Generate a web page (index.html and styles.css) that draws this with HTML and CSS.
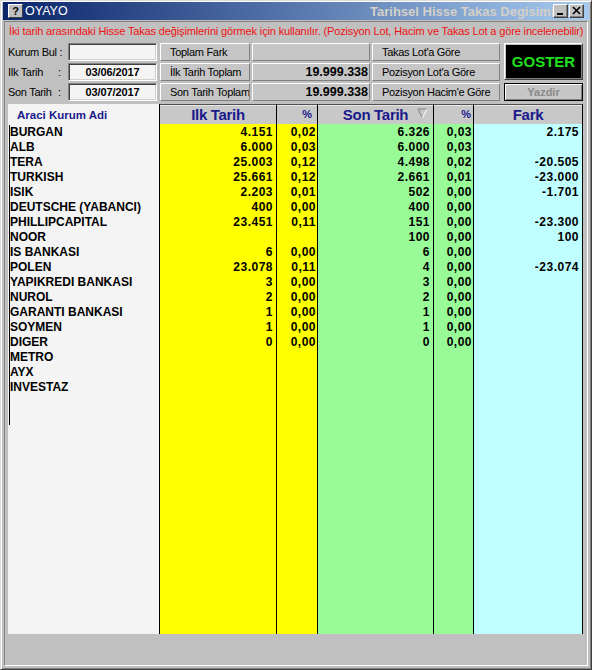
FILE: index.html
```html
<!DOCTYPE html>
<html lang="tr">
<head>
<meta charset="utf-8">
<title>OYAYO</title>
<link rel="stylesheet" href="styles.css">
</head>
<body>
<div class="window">
  <div class="titlebar">
    <div class="title-icon">?</div>
    <div class="caption">
      <span class="app">OYAYO</span>
      <span class="subtitle">Tarihsel Hisse Takas Degisimi</span>
    </div>
    <div class="win-btn win-min">
      <svg width="13" height="12" viewBox="0 0 13 12"><rect x="3" y="8" width="6" height="2" fill="#000"/></svg>
    </div>
    <div class="win-btn win-close">
      <svg width="13" height="12" viewBox="0 0 13 12"><path d="M3 2 L10 9 M10 2 L3 9" stroke="#000" stroke-width="1.6" fill="none"/></svg>
    </div>
  </div>

  <div class="client">
    <div class="hint">İki tarih arasındaki Hisse Takas değişimlerini görmek için kullanılır. (Pozisyon Lot, Hacim ve Takas Lot a göre incelenebilir)</div>

    <div class="controls">
      <div class="label">Kurum Bul :</div>
      <div class="input"></div>
      <div class="btn">Toplam Fark</div>
      <div class="value"></div>
      <div class="btn">Takas Lot'a Göre</div>
      <div class="goster">GOSTER</div>

      <div class="label"><span class="lbl-name">Ilk Tarih</span><span>:</span></div>
      <div class="input">03/06/2017</div>
      <div class="btn">İlk Tarih Toplam</div>
      <div class="value">19.999.338</div>
      <div class="btn">Pozisyon Lot'a Göre</div>

      <div class="label"><span class="lbl-name">Son Tarih</span><span>:</span></div>
      <div class="input">03/07/2017</div>
      <div class="btn">Son Tarih Toplam</div>
      <div class="value">19.999.338</div>
      <div class="btn">Pozisyon Hacim'e Göre</div>
      <div class="yazdir">Yazdir</div>
    </div>

    <div class="grid">
      <div class="col col-name">
        <div class="head head-name">Araci Kurum Adi</div>
        <div class="body">
          <div class="names">
            <div class="name">BURGAN</div>
            <div class="name">ALB</div>
            <div class="name">TERA</div>
            <div class="name">TURKISH</div>
            <div class="name">ISIK</div>
            <div class="name">DEUTSCHE (YABANCI)</div>
            <div class="name">PHILLIPCAPITAL</div>
            <div class="name">NOOR</div>
            <div class="name">IS BANKASI</div>
            <div class="name">POLEN</div>
            <div class="name">YAPIKREDI BANKASI</div>
            <div class="name">NUROL</div>
            <div class="name">GARANTI BANKASI</div>
            <div class="name">SOYMEN</div>
            <div class="name">DIGER</div>
            <div class="name">METRO</div>
            <div class="name">AYX</div>
            <div class="name">INVESTAZ</div>
          </div>
        </div>
      </div>

      <div class="col col-a">
        <div class="head">Ilk Tarih</div>
        <div class="body">
          <div class="cell">4.151</div>
          <div class="cell">6.000</div>
          <div class="cell">25.003</div>
          <div class="cell">25.661</div>
          <div class="cell">2.203</div>
          <div class="cell">400</div>
          <div class="cell">23.451</div>
          <div class="cell"></div>
          <div class="cell">6</div>
          <div class="cell">23.078</div>
          <div class="cell">3</div>
          <div class="cell">2</div>
          <div class="cell">1</div>
          <div class="cell">1</div>
          <div class="cell">0</div>
        </div>
      </div>

      <div class="col col-ap">
        <div class="head head-pct">%</div>
        <div class="body">
          <div class="cell">0,02</div>
          <div class="cell">0,03</div>
          <div class="cell">0,12</div>
          <div class="cell">0,12</div>
          <div class="cell">0,01</div>
          <div class="cell">0,00</div>
          <div class="cell">0,11</div>
          <div class="cell"></div>
          <div class="cell">0,00</div>
          <div class="cell">0,11</div>
          <div class="cell">0,00</div>
          <div class="cell">0,00</div>
          <div class="cell">0,00</div>
          <div class="cell">0,00</div>
          <div class="cell">0,00</div>
        </div>
      </div>

      <div class="col col-b">
        <div class="head head-sort">Son Tarih
          <svg class="sort" width="11" height="11" viewBox="0 0 11 11"><path d="M10 1 L1 1 L5.5 10" stroke="#808080" fill="none"/><path d="M10 1 L5.5 10" stroke="#ffffff" fill="none"/></svg>
        </div>
        <div class="body">
          <div class="cell">6.326</div>
          <div class="cell">6.000</div>
          <div class="cell">4.498</div>
          <div class="cell">2.661</div>
          <div class="cell">502</div>
          <div class="cell">400</div>
          <div class="cell">151</div>
          <div class="cell">100</div>
          <div class="cell">6</div>
          <div class="cell">4</div>
          <div class="cell">3</div>
          <div class="cell">2</div>
          <div class="cell">1</div>
          <div class="cell">1</div>
          <div class="cell">0</div>
        </div>
      </div>

      <div class="col col-bp">
        <div class="head head-pct">%</div>
        <div class="body">
          <div class="cell">0,03</div>
          <div class="cell">0,03</div>
          <div class="cell">0,02</div>
          <div class="cell">0,01</div>
          <div class="cell">0,00</div>
          <div class="cell">0,00</div>
          <div class="cell">0,00</div>
          <div class="cell">0,00</div>
          <div class="cell">0,00</div>
          <div class="cell">0,00</div>
          <div class="cell">0,00</div>
          <div class="cell">0,00</div>
          <div class="cell">0,00</div>
          <div class="cell">0,00</div>
          <div class="cell">0,00</div>
        </div>
      </div>

      <div class="col col-f">
        <div class="head">Fark</div>
        <div class="body">
          <div class="cell">2.175</div>
          <div class="cell"></div>
          <div class="cell">-20.505</div>
          <div class="cell">-23.000</div>
          <div class="cell">-1.701</div>
          <div class="cell"></div>
          <div class="cell">-23.300</div>
          <div class="cell">100</div>
          <div class="cell"></div>
          <div class="cell">-23.074</div>
        </div>
      </div>
    </div>
  </div>
</div>
</body>
</html>
```

FILE: styles.css
```css
* { box-sizing: border-box; }

html, body {
  margin: 0;
  padding: 0;
}

body {
  width: 592px;
  height: 670px;
  overflow: hidden;
  background: #c0c0c0;
  font-family: "Liberation Sans", Arial, sans-serif;
  color: #000;
}

.window {
  width: 592px;
  height: 670px;
  border: 1px solid;
  border-color: #dcdcdc #404040 #404040 #dcdcdc;
  box-shadow: inset 1px 1px #ffffff, inset -1px -1px #808080;
  padding: 1px 2px 2px;
  background: #c0c0c0;
  display: flex;
  flex-direction: column;
}

/* ---------- title bar ---------- */
.titlebar {
  height: 18px;
  flex: none;
  display: flex;
  align-items: center;
  padding: 0 5px;
  background: linear-gradient(to right, #0a246a, #a6caf0);
}

.title-icon {
  width: 15px;
  height: 14px;
  flex: none;
  background: #c0c0c0;
  border: 1px solid;
  border-color: #ffffff #404040 #404040 #ffffff;
  font-size: 11px;
  font-weight: bold;
  line-height: 12px;
  text-align: center;
}

.caption {
  flex: 1;
  min-width: 0;
  display: flex;
  overflow: hidden;
  white-space: nowrap;
}

.app {
  width: 345px;
  flex: none;
  margin-left: 2px;
  color: #ffffff;
  font-size: 12.5px;
}

.subtitle {
  color: #d4d0c8;
  font-size: 13px;
  font-weight: bold;
}

.win-btn {
  width: 15px;
  height: 14px;
  flex: none;
  background: #c0c0c0;
  border: 1px solid;
  border-color: #ffffff #404040 #404040 #ffffff;
  box-shadow: inset -1px -1px #808080;
  display: flex;
}

.win-min { margin-right: 1px; }

/* ---------- client ---------- */
.client {
  flex: 1;
  margin: 1px 1px 1px;
  border: 1px solid;
  border-color: #808080 #ffffff #ffffff #808080;
  padding: 2px 3px 0;
  display: flex;
  flex-direction: column;
}

.hint {
  height: 14px;
  line-height: 14px;
  padding-left: 1px;
  color: #ee1111;
  font-size: 11px;
  letter-spacing: -0.14px;
  white-space: nowrap;
}

.controls {
  margin-top: 5px;
  display: grid;
  grid-template-columns: 58px 90px 90px 118px 128px 81px;
  grid-template-rows: repeat(3, 18px);
  gap: 2px;
  font-size: 11px;
  letter-spacing: -0.3px;
}

.label {
  display: flex;
  align-items: center;
  white-space: nowrap;
}

.lbl-name {
  width: 50px;
  flex: none;
}

.input {
  width: 89px;
  border: 1px solid;
  border-color: #808080 #ffffff #ffffff #808080;
  box-shadow: inset 1px 1px #404040, inset -1px -1px #d4d0c8;
  background: #f4f4f4;
  font-weight: bold;
  letter-spacing: -0.1px;
  text-align: center;
  line-height: 16px;
}

.btn,
.value {
  border: 1px solid;
  border-color: #ffffff #808080 #808080 #ffffff;
  background: #c6c6c6;
  display: flex;
  align-items: center;
  white-space: nowrap;
  overflow: hidden;
}

.btn { padding-left: 9px; }

.value {
  justify-content: flex-end;
  padding-right: 1px;
  font-size: 12.5px;
  font-weight: bold;
  letter-spacing: 0;
}

.goster {
  grid-column: 6;
  grid-row: 1 / span 2;
  margin-left: 2px;
  margin-bottom: 1px;
  background: #000;
  border: 1px solid;
  border-color: #ffffff #404040 #404040 #ffffff;
  box-shadow: inset 1px 1px #c0c0c0, inset -1px -1px #808080;
  color: #1fe01f;
  font-size: 15px;
  font-weight: bold;
  letter-spacing: 0;
  display: flex;
  align-items: center;
  justify-content: center;
}

.yazdir {
  grid-column: 6;
  grid-row: 3;
  margin-left: 2px;
  border: 1px solid #000;
  box-shadow: inset 1px 1px #ffffff, inset -1px -1px #808080;
  background: #c6c6c6;
  color: #8a8a8a;
  font-weight: bold;
  letter-spacing: 0;
  display: flex;
  align-items: center;
  justify-content: center;
}

/* ---------- grid ---------- */
.grid {
  margin-top: 3px;
  display: flex;
}

.col {
  display: flex;
  flex-direction: column;
  border-left: 1px solid #000;
}

.col-name { width: 151px; border-left: none; background: #f4f4f4; }
.col-a { width: 117px; }
.col-ap { width: 41px; }
.col-b { width: 116px; }
.col-bp { width: 40px; }
.col-f { width: 110px; border-right: 1px solid #000; }

.head {
  position: relative;
  height: 20px;
  background: #c8c8c8;
  border-top: 1px solid #505050;
  box-shadow: inset 0 1px #e8e8e8;
  display: flex;
  align-items: center;
  justify-content: center;
  padding-bottom: 1px;
  color: #1a1a8c;
  font-size: 15px;
  font-weight: bold;
  letter-spacing: -0.3px;
  white-space: nowrap;
}

.head-name {
  background: #f4f4f4;
  border-top-color: #f4f4f4;
  box-shadow: none;
  justify-content: flex-start;
  padding-left: 9px;
  padding-bottom: 0;
  font-size: 11.5px;
  letter-spacing: 0;
}

.head-pct {
  justify-content: flex-end;
  font-size: 11px;
  letter-spacing: 0;
}

.col-ap .head-pct { padding-right: 5px; }
.col-bp .head-pct { padding-right: 2px; }

.sort {
  position: absolute;
  right: 5px;
  top: 3px;
}

.body {
  height: 510px;
  padding-top: 1px;
}

.col-a .body, .col-ap .body { background: #ffff00; }
.col-b .body, .col-bp .body { background: #98fb98; }
.col-f .body { background: #bfffff; }

.names {
  margin-left: 1px;
  height: 300px;
  border-left: 1px solid #000;
}

.name,
.cell {
  height: 15px;
  line-height: 15px;
  font-size: 12px;
  font-weight: bold;
  white-space: nowrap;
}

.cell {
  text-align: right;
  padding-right: 3px;
  letter-spacing: 0.5px;
}

.col-ap .cell,
.col-bp .cell { padding-right: 1px; }
```
